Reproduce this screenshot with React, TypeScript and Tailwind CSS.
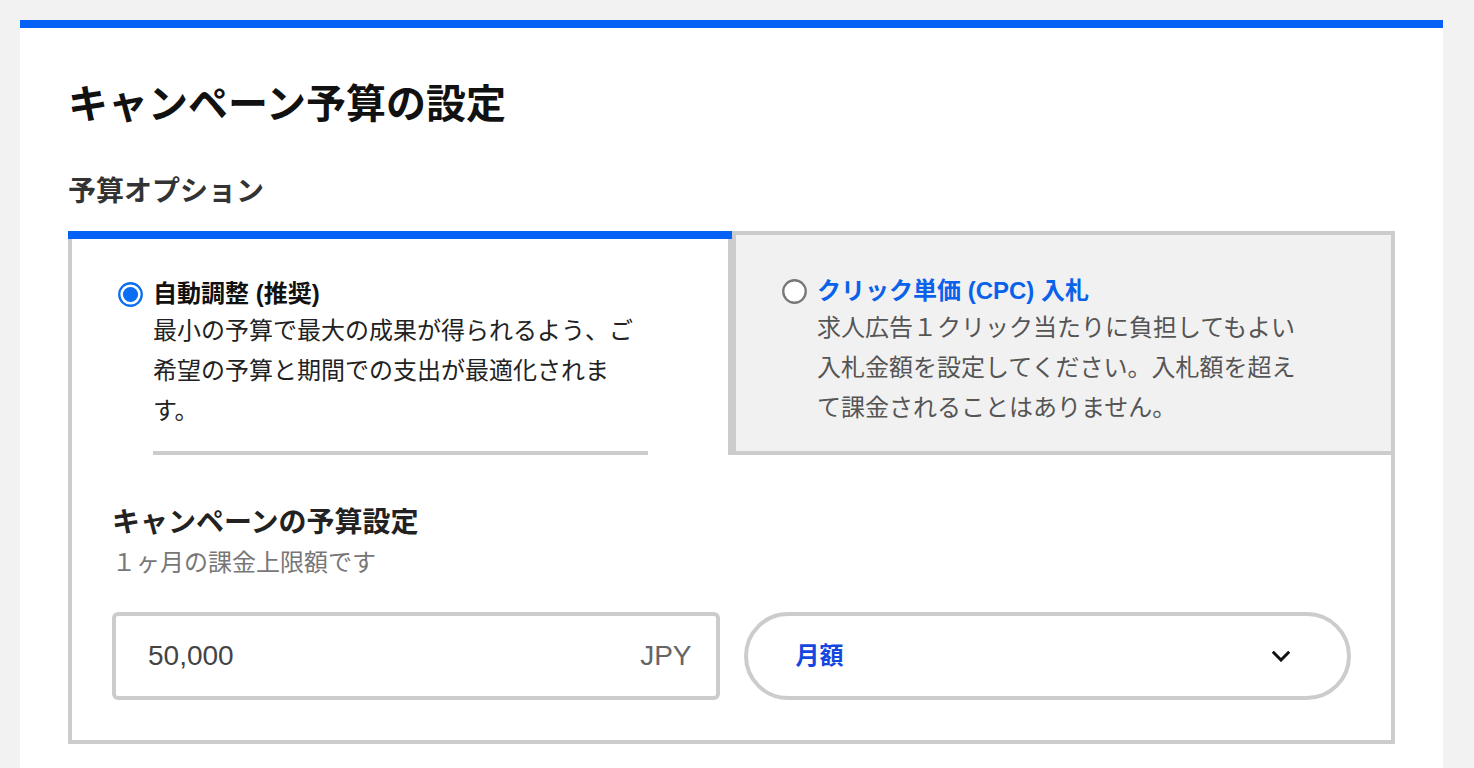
const FONT = "font-['Liberation_Sans','Noto_Sans_CJK_JP',sans-serif]";

function Radio({ checked }: { checked: boolean }) {
  return (
    <svg width="25" height="25" viewBox="0 0 25 25" className="shrink-0">
      <circle
        cx="12.5"
        cy="12.5"
        r="11.25"
        fill="#fff"
        stroke={checked ? "#0b6ef2" : "#777"}
        strokeWidth="2.3"
      />
      {checked && <circle cx="12.5" cy="12.5" r="7.6" fill="#0b6ef2" />}
    </svg>
  );
}

function Chevron() {
  return (
    <svg width="18" height="11" viewBox="0 0 18 11" className="shrink-0">
      <polyline
        points="1.8,1.8 9,9 16.2,1.8"
        fill="none"
        stroke="#111"
        strokeWidth="3"
        strokeLinecap="square"
      />
    </svg>
  );
}

interface OptionProps {
  checked: boolean;
  label: string;
  description: string;
}

function OptionBody({ checked, label, description }: OptionProps) {
  return (
    <>
      <div className="flex h-[34px] items-center">
        <Radio checked={checked} />
      </div>
      <div
        className={`ml-[10px] w-[496px] ${
          checked ? "border-b-4 border-[#ccc] pb-5" : ""
        }`}
      >
        <div
          className={`text-[24px] font-bold leading-[34px] ${
            checked ? "text-[#111]" : "text-[#0b62ea]"
          }`}
        >
          {label}
        </div>
        <p
          className={`text-[24px] leading-[40px] ${
            checked ? "text-[#222]" : "text-[#555]"
          }`}
        >
          {description}
        </p>
      </div>
    </>
  );
}

export default function App() {
  return (
    <div className={`min-h-screen bg-[#f2f2f2] pt-5 ${FONT}`}>
      <div className="ml-5 w-[1423px] border-t-8 border-[#0560f5] bg-white px-12 pt-[46px] pb-12">
        <h1 className="text-[40px] font-bold leading-[60px] text-[#111]">
          キャンペーン予算の設定
        </h1>
        <h2 className="mt-[38px] text-[28px] font-bold leading-[40px] text-[#333]">
          予算オプション
        </h2>

        <div className="mt-[19px]">
          <div className="grid grid-cols-[664px_1fr]">
            <div className="flex flex-col">
              <div className="h-2 bg-[#0560f5]" />
              <div className="flex flex-1 border-x-4 border-[#ccc] pl-[46px] pr-[80px] pt-[38px]">
                <OptionBody
                  checked
                  label="自動調整 (推奨)"
                  description="最小の予算で最大の成果が得られるよう、ご希望の予算と期間での支出が最適化されます。"
                />
              </div>
            </div>
            <div className="flex border-4 border-[#ccc] bg-[#f1f1f1] pl-[46px] pt-[39px]">
              <OptionBody
                checked={false}
                label="クリック単価 (CPC) 入札"
                description="求人広告１クリック当たりに負担してもよい入札金額を設定してください。入札額を超えて課金されることはありません。"
              />
            </div>
          </div>

          <div className="border-x-4 border-b-4 border-[#ccc] px-10 pt-[48px] pb-10">
            <h3 className="text-[28px] font-bold leading-[40px] text-[#222]">
              キャンペーンの予算設定
            </h3>
            <p className="text-[24px] leading-[40px] text-[#777]">
              １ヶ月の課金上限額です
            </p>

            <div className="mt-[29px] grid grid-cols-2 gap-6">
              <div className="flex h-[88px] items-center justify-between rounded-md border-4 border-[#ccc] pl-8 pr-6">
                <span className="text-[28px] text-[#444]">50,000</span>
                <span className="text-[28px] text-[#666]">JPY</span>
              </div>
              <div className="flex h-[88px] items-center justify-between rounded-full border-4 border-[#ccc] pl-12 pr-[57px]">
                <span className="text-[24px] font-bold text-[#1447e0]">月額</span>
                <Chevron />
              </div>
            </div>
          </div>
        </div>
      </div>
    </div>
  );
}
